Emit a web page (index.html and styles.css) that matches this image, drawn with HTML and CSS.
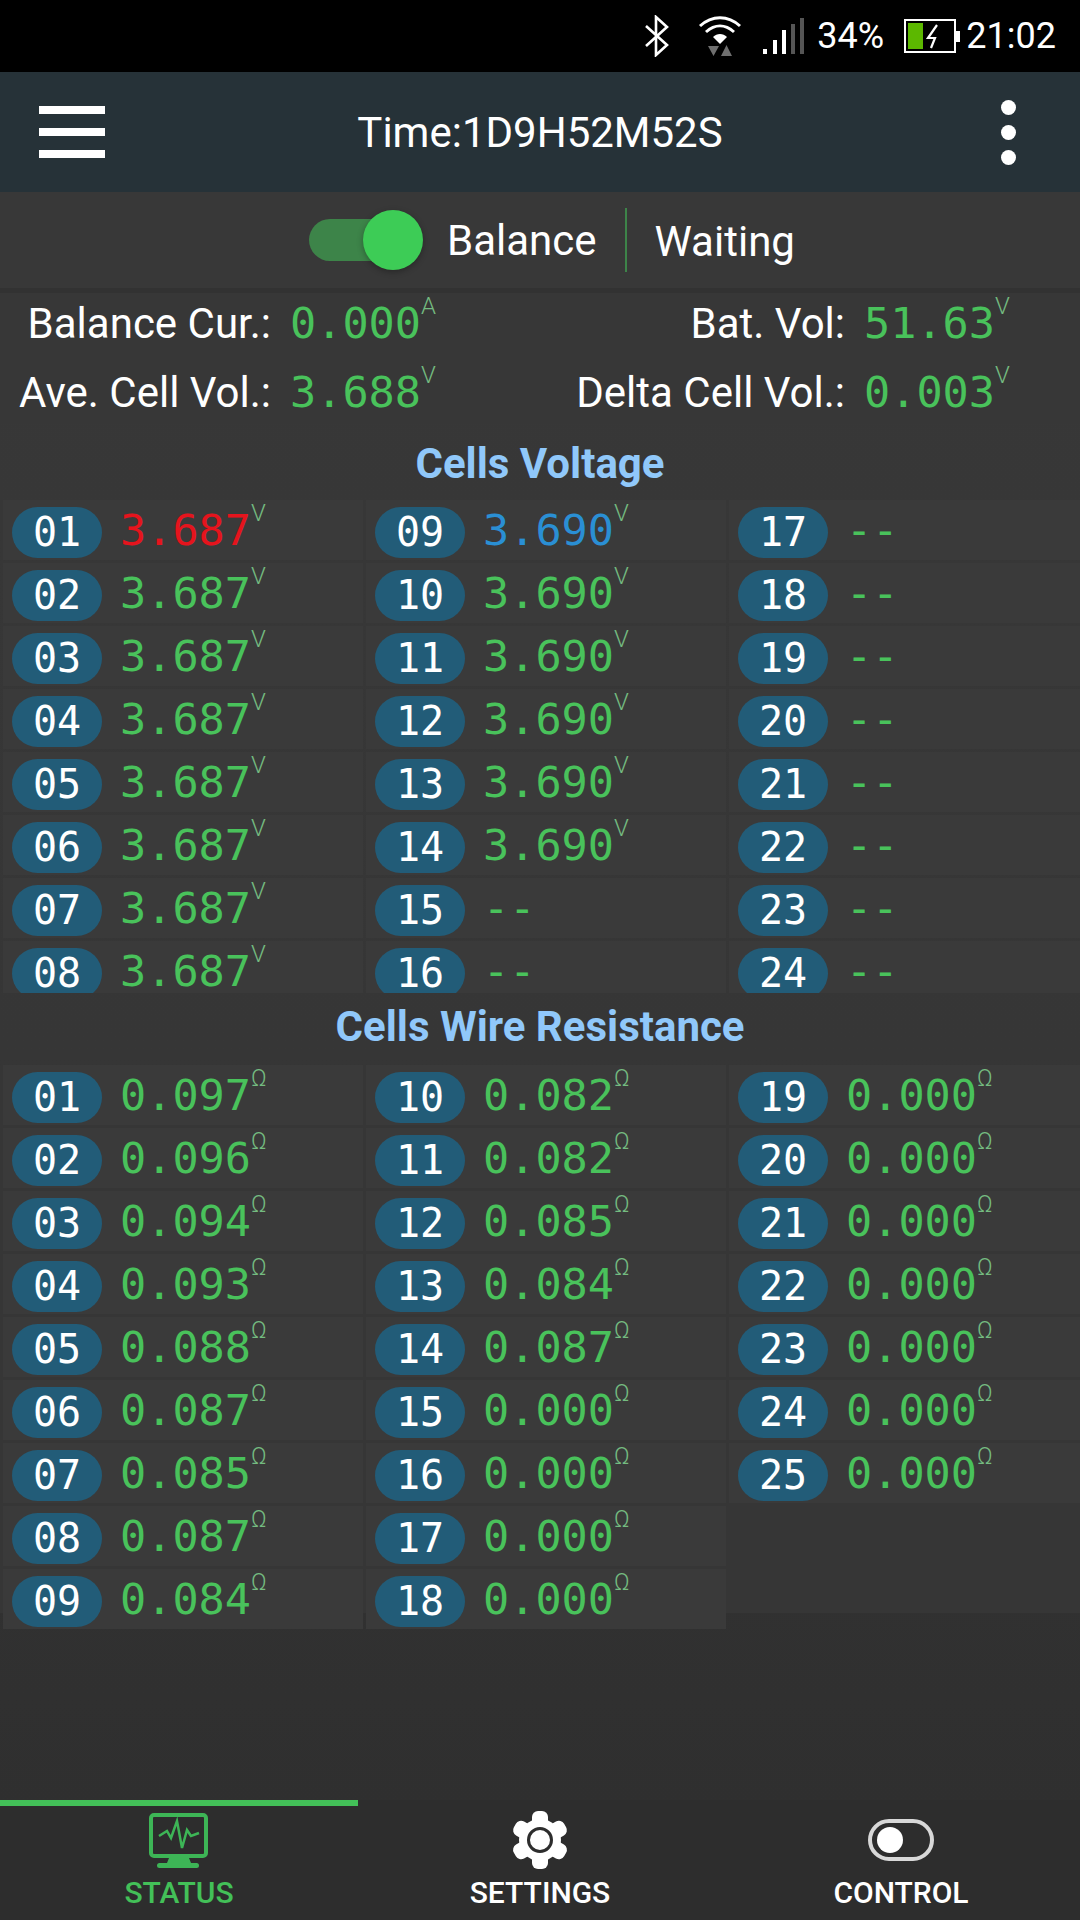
FILE: index.html
```html
<!DOCTYPE html>
<html lang="en">
<head>
    <meta charset="UTF-8">
    <title>BMS Status</title>
    <link rel="stylesheet" href="styles.css">
</head>
<body>
    <div class="status-bar">
        <svg class="ic-bt" viewBox="0 0 26 42"><path d="M2 11 L23 30 L12 40 V2 L23 12 L2 31" fill="none" stroke="#fff" stroke-width="2.6"/></svg>
        <svg class="ic-wifi" viewBox="0 0 44 44">
            <path d="M2 12 C14 1 30 1 42 12 M8 18 C17 10 27 10 36 18" fill="none" stroke="#fff" stroke-width="3"/>
            <path d="M15 23 C19 19 25 19 29 23 L22 30 Z" fill="#fff"/>
            <path d="M10 32 H21 L15.500 42 Z M23 42 H34 L28.500 31 Z" fill="#6f6f6f"/>
        </svg>
        <svg class="ic-signal" viewBox="0 0 42 36">
            <rect x="0" y="31" width="4" height="5" fill="#fff"/>
            <rect x="10" y="22" width="4" height="14" fill="#fff"/>
            <rect x="19" y="12" width="4" height="24" fill="#fff"/>
            <rect x="28" y="6" width="4" height="30" fill="#555"/>
            <rect x="37" y="0" width="4" height="36" fill="#555"/>
        </svg>
        <span class="pct">34%</span>
        <svg class="ic-batt" viewBox="0 0 56 34">
            <rect x="1" y="1" width="50" height="32" fill="none" stroke="#fff" stroke-width="2"/>
            <rect x="4" y="4" width="15" height="26" fill="#5cb800"/>
            <rect x="52" y="12" width="4" height="11" fill="#fff"/>
            <path d="M33 6 L24 19 H31 L27 29" fill="none" stroke="#fff" stroke-width="2.200"/>
        </svg>
        <span class="clock">21:02</span>
    </div>

    <header class="app-bar">
        <div class="menu-icon"><span></span><span></span><span></span></div>
        <div class="app-title">Time:1D9H52M52S</div>
        <div class="more-icon"><span></span><span></span><span></span></div>
    </header>

    <div class="balance-row">
        <div class="switch"><span class="switch-track"></span><span class="switch-thumb"></span></div>
        <span class="balance-label">Balance</span>
        <span class="balance-state">Waiting</span>
    </div>

    <div class="summary">
        <span class="sum-label">Balance Cur.:</span>
        <span class="sum-value val">0.000<sup class="unit">A</sup></span>
        <span class="sum-label">Bat. Vol:</span>
        <span class="sum-value val">51.63<sup class="unit">V</sup></span>
        <span class="sum-label">Ave. Cell Vol.:</span>
        <span class="sum-value val">3.688<sup class="unit">V</sup></span>
        <span class="sum-label">Delta Cell Vol.:</span>
        <span class="sum-value val">0.003<sup class="unit">V</sup></span>
    </div>

    <h2 class="section-title first">Cells Voltage</h2>
    <div class="cells volts">
        <div class="cell"><span class="pill">01</span><span class="val low">3.687<sup class="unit">V</sup></span></div>
        <div class="cell"><span class="pill">02</span><span class="val">3.687<sup class="unit">V</sup></span></div>
        <div class="cell"><span class="pill">03</span><span class="val">3.687<sup class="unit">V</sup></span></div>
        <div class="cell"><span class="pill">04</span><span class="val">3.687<sup class="unit">V</sup></span></div>
        <div class="cell"><span class="pill">05</span><span class="val">3.687<sup class="unit">V</sup></span></div>
        <div class="cell"><span class="pill">06</span><span class="val">3.687<sup class="unit">V</sup></span></div>
        <div class="cell"><span class="pill">07</span><span class="val">3.687<sup class="unit">V</sup></span></div>
        <div class="cell"><span class="pill">08</span><span class="val">3.687<sup class="unit">V</sup></span></div>
        <div class="cell"><span class="pill">09</span><span class="val high">3.690<sup class="unit">V</sup></span></div>
        <div class="cell"><span class="pill">10</span><span class="val">3.690<sup class="unit">V</sup></span></div>
        <div class="cell"><span class="pill">11</span><span class="val">3.690<sup class="unit">V</sup></span></div>
        <div class="cell"><span class="pill">12</span><span class="val">3.690<sup class="unit">V</sup></span></div>
        <div class="cell"><span class="pill">13</span><span class="val">3.690<sup class="unit">V</sup></span></div>
        <div class="cell"><span class="pill">14</span><span class="val">3.690<sup class="unit">V</sup></span></div>
        <div class="cell"><span class="pill">15</span><span class="val">--</span></div>
        <div class="cell"><span class="pill">16</span><span class="val">--</span></div>
        <div class="cell"><span class="pill">17</span><span class="val">--</span></div>
        <div class="cell"><span class="pill">18</span><span class="val">--</span></div>
        <div class="cell"><span class="pill">19</span><span class="val">--</span></div>
        <div class="cell"><span class="pill">20</span><span class="val">--</span></div>
        <div class="cell"><span class="pill">21</span><span class="val">--</span></div>
        <div class="cell"><span class="pill">22</span><span class="val">--</span></div>
        <div class="cell"><span class="pill">23</span><span class="val">--</span></div>
        <div class="cell"><span class="pill">24</span><span class="val">--</span></div>
    </div>

    <h2 class="section-title">Cells Wire Resistance</h2>
    <div class="cells wires">
        <div class="cell"><span class="pill">01</span><span class="val">0.097<sup class="unit">Ω</sup></span></div>
        <div class="cell"><span class="pill">02</span><span class="val">0.096<sup class="unit">Ω</sup></span></div>
        <div class="cell"><span class="pill">03</span><span class="val">0.094<sup class="unit">Ω</sup></span></div>
        <div class="cell"><span class="pill">04</span><span class="val">0.093<sup class="unit">Ω</sup></span></div>
        <div class="cell"><span class="pill">05</span><span class="val">0.088<sup class="unit">Ω</sup></span></div>
        <div class="cell"><span class="pill">06</span><span class="val">0.087<sup class="unit">Ω</sup></span></div>
        <div class="cell"><span class="pill">07</span><span class="val">0.085<sup class="unit">Ω</sup></span></div>
        <div class="cell"><span class="pill">08</span><span class="val">0.087<sup class="unit">Ω</sup></span></div>
        <div class="cell"><span class="pill">09</span><span class="val">0.084<sup class="unit">Ω</sup></span></div>
        <div class="cell"><span class="pill">10</span><span class="val">0.082<sup class="unit">Ω</sup></span></div>
        <div class="cell"><span class="pill">11</span><span class="val">0.082<sup class="unit">Ω</sup></span></div>
        <div class="cell"><span class="pill">12</span><span class="val">0.085<sup class="unit">Ω</sup></span></div>
        <div class="cell"><span class="pill">13</span><span class="val">0.084<sup class="unit">Ω</sup></span></div>
        <div class="cell"><span class="pill">14</span><span class="val">0.087<sup class="unit">Ω</sup></span></div>
        <div class="cell"><span class="pill">15</span><span class="val">0.000<sup class="unit">Ω</sup></span></div>
        <div class="cell"><span class="pill">16</span><span class="val">0.000<sup class="unit">Ω</sup></span></div>
        <div class="cell"><span class="pill">17</span><span class="val">0.000<sup class="unit">Ω</sup></span></div>
        <div class="cell"><span class="pill">18</span><span class="val">0.000<sup class="unit">Ω</sup></span></div>
        <div class="cell"><span class="pill">19</span><span class="val">0.000<sup class="unit">Ω</sup></span></div>
        <div class="cell"><span class="pill">20</span><span class="val">0.000<sup class="unit">Ω</sup></span></div>
        <div class="cell"><span class="pill">21</span><span class="val">0.000<sup class="unit">Ω</sup></span></div>
        <div class="cell"><span class="pill">22</span><span class="val">0.000<sup class="unit">Ω</sup></span></div>
        <div class="cell"><span class="pill">23</span><span class="val">0.000<sup class="unit">Ω</sup></span></div>
        <div class="cell"><span class="pill">24</span><span class="val">0.000<sup class="unit">Ω</sup></span></div>
        <div class="cell"><span class="pill">25</span><span class="val">0.000<sup class="unit">Ω</sup></span></div>
    </div>

    <nav class="tabs">
        <div class="tab active">
            <svg class="tab-icon" width="60" height="56" viewBox="0 0 60 56">
                <rect x="2" y="2" width="55" height="41" rx="3" fill="none" stroke="#3db556" stroke-width="4"/>
                <path d="M10 23 L18 18 L22 25 L28 8 L33 35 L38 17 L42 23 L50 20" fill="none" stroke="#3db556" stroke-width="2.500"/>
                <path d="M20 45 H40 L42 50 H18 Z" fill="#3db556"/>
                <rect x="8" y="50" width="42" height="5" rx="2.500" fill="#3db556"/>
            </svg>
            <span class="tab-label">STATUS</span>
        </div>
        <div class="tab">
            <svg class="tab-icon" width="60" height="60" viewBox="0 0 60 60">
                <circle cx="30" cy="30" r="21" fill="#fff"/>
                <g fill="#fff">
                    <rect x="22" y="1" width="16" height="58" rx="6"/>
                    <rect x="22" y="1" width="16" height="58" rx="6" transform="rotate(60 30 30)"/>
                    <rect x="22" y="1" width="16" height="58" rx="6" transform="rotate(120 30 30)"/>
                </g>
                <circle cx="30" cy="30" r="11.500" fill="none" stroke="#2d2d2d" stroke-width="3"/>
            </svg>
            <span class="tab-label">SETTINGS</span>
        </div>
        <div class="tab">
            <svg class="tab-icon" width="68" height="44" viewBox="0 0 68 44">
                <rect x="3" y="3" width="62" height="38" rx="19" fill="none" stroke="#d8d8d8" stroke-width="4"/>
                <circle cx="23" cy="22" r="13" fill="#fff"/>
            </svg>
            <span class="tab-label">CONTROL</span>
        </div>
    </nav>
</body>
</html>
```

FILE: styles.css
```css
* {
    box-sizing: border-box;
}

html, body {
    margin: 0;
    padding: 0;
}

body {
    width: 1080px;
    height: 1920px;
    overflow: hidden;
    display: flex;
    flex-direction: column;
    background: linear-gradient(#383838, #363636 55%, #2f2f2f 94%);
    color: #fff;
    font-family: Roboto, sans-serif;
}

/* status bar */
.status-bar {
    height: 72px;
    background-color: #000;
    display: flex;
    align-items: center;
    justify-content: flex-end;
    padding-right: 24px;
    flex-shrink: 0;
}

.status-bar svg {
    display: block;
    flex-shrink: 0;
}

.ic-bt {
    width: 26px;
    height: 42px;
    margin-right: 28px;
}

.ic-wifi {
    width: 44px;
    height: 44px;
    margin-right: 21px;
}

.ic-signal {
    width: 42px;
    height: 36px;
    margin-right: 12px;
}

.pct {
    font-size: 36px;
    width: 68px;
    margin-right: 19px;
}

.ic-batt {
    width: 56px;
    height: 34px;
    margin-right: 6px;
}

.clock {
    font-size: 36px;
}

/* app bar */
.app-bar {
    height: 120px;
    background-color: #263238;
    display: grid;
    grid-template-columns: 1fr auto 1fr;
    align-items: center;
    padding: 0 64px 0 39px;
    flex-shrink: 0;
}

.app-title {
    font-size: 42px;
    margin-left: 25px;
}

.menu-icon {
    width: 66px;
    display: flex;
    flex-direction: column;
    gap: 14px;
}

.menu-icon span {
    height: 8px;
    background-color: #fff;
}

.more-icon {
    justify-self: end;
    display: flex;
    flex-direction: column;
    gap: 10px;
}

.more-icon span {
    width: 15px;
    height: 15px;
    border-radius: 50%;
    background-color: #fff;
}

/* balance switch row */
.balance-row {
    height: 96px;
    display: flex;
    align-items: center;
    padding-left: 309px;
    flex-shrink: 0;
    background-color: #383838;
}

.switch {
    position: relative;
    width: 114px;
    height: 60px;
    margin-right: 24px;
    display: flex;
    align-items: center;
}

.switch-track {
    width: 84px;
    height: 42px;
    border-radius: 21px;
    background-color: #3d8449;
}

.switch-thumb {
    position: absolute;
    left: 54px;
    top: 0;
    width: 60px;
    height: 60px;
    border-radius: 50%;
    background-color: #3dcc56;
    box-shadow: 0 2px 6px rgba(0, 0, 0, 0.3);
}

.balance-label {
    font-size: 42px;
    padding-right: 28px;
}

.balance-state {
    font-size: 42px;
    border-left: 2px solid #3d8449;
    padding: 10px 0 6px 28px;
    line-height: 48px;
}

/* summary values */
.summary {
    height: 135px;
    border-top: 5px solid #323232;
    background-color: #373737;
    display: grid;
    grid-template-columns: 271px 269px 305px 235px;
    grid-template-rows: 60px 60px;
    row-gap: 9px;
    align-items: center;
    flex-shrink: 0;
}

.sum-label {
    font-size: 42px;
    text-align: right;
    white-space: nowrap;
}

.sum-value {
    padding-left: 19px;
}

.val {
    font-family: "DejaVu Sans Mono", monospace;
    font-size: 43.500px;
    color: #49c25b;
    white-space: nowrap;
}

.val.low {
    color: #e5141d;
}

.val.high {
    color: #2a8fd4;
}

.unit {
    font-family: Roboto, sans-serif;
    font-size: 24px;
    font-weight: 300;
    line-height: 0;
    vertical-align: 24px;
    color: #74bb80;
}

/* cell tables */
.section-title {
    margin: 0;
    height: 72px;
    font-size: 42px;
    font-weight: 700;
    line-height: 68px;
    text-align: center;
    color: #90c8fa;
    flex-shrink: 0;
}

.section-title.first {
    margin-top: 5px;
    line-height: 72px;
}

.cells {
    flex-shrink: 0;
    display: grid;
    grid-auto-flow: column;
    grid-template-columns: 360px 360px 351px;
    gap: 3px;
    padding-left: 3px;
}

.volts {
    grid-template-rows: repeat(8, 60px);
    height: 493px;
    overflow: hidden;
}

.wires {
    grid-template-rows: repeat(9, 60px);
    height: 548px;
    background-color: #363636;
}

.cell {
    height: 60px;
    background-color: #3a3a3a;
    display: flex;
    align-items: center;
    padding: 5px 0 0 9px;
}

.cell .val {
    margin-top: -5px;
}

.pill {
    width: 90px;
    height: 51px;
    border-radius: 26px;
    background-color: #225c78;
    font-family: "DejaVu Sans Mono", monospace;
    font-size: 40px;
    text-align: center;
    line-height: 51px;
    margin-right: 18px;
    flex-shrink: 0;
}

/* bottom tabs */
.tabs {
    margin-top: auto;
    height: 120px;
    background-color: #2d2d2d;
    display: grid;
    grid-template-columns: 358px 364px 358px;
    flex-shrink: 0;
}

.tab {
    display: flex;
    flex-direction: column;
    align-items: center;
    height: 120px;
    position: relative;
}

.tab.active {
    border-top: 6px solid #43c058;
    color: #43c058;
}

.tab-icon {
    position: absolute;
    top: 10px;
    filter: blur(0.6px);
}

.tab.active .tab-icon {
    top: 7px;
}

.tab:last-child .tab-icon {
    top: 18px;
}

.tab-label {
    position: absolute;
    top: 75px;
    font-size: 30px;
    font-weight: 500;
    line-height: 36px;
}

.tab.active .tab-label {
    top: 69px;
}
```
